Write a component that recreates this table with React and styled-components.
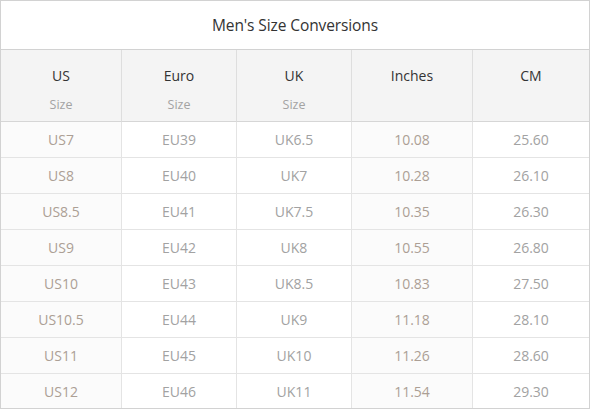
import React from 'react';
import styled, { createGlobalStyle } from 'styled-components';

const GlobalStyle = createGlobalStyle`
  html, body {
    margin: 0;
    padding: 0;
    background: #ffffff;
  }
  body {
    font-family: "Open Sans", "Noto Sans", sans-serif;
  }
`;

const Card = styled.div`
  width: 590px;
  height: 409px;
  box-sizing: border-box;
  border: 1px solid #d2d2d2;
  overflow: hidden;
  background: #fff;
`;

const Title = styled.div`
  height: 48px;
  display: flex;
  align-items: center;
  justify-content: center;
  border-bottom: 1px solid #d2d2d2;
  font-size: 15.5px;
  color: #333;
  letter-spacing: -0.1px;
`;

const Grid = styled.div`
  display: grid;
  grid-template-columns: 121px 115px 115px 121px 116px;
`;

const HeadCell = styled.div`
  height: 71px;
  display: flex;
  flex-direction: column;
  align-items: center;
  background: #f4f4f4;
  border-right: ${({ $last }) => ($last ? 'none' : '1px solid #dedede')};
  border-bottom: 1px solid #d6d6d6;
`;

const HeadLabel = styled.span`
  margin-top: 16px;
  font-size: 14px;
  color: #333;
  line-height: 20px;
`;

const HeadSub = styled.span`
  margin-top: 10px;
  font-size: 12.5px;
  color: #a3a3a3;
  line-height: 18px;
`;

const Cell = styled.div`
  height: 35px;
  display: flex;
  align-items: center;
  justify-content: center;
  font-size: 14px;
  color: ${({ $warm }) => ($warm ? '#ac9f95' : '#a2a2a2')};
  background: ${({ $shade }) => ($shade ? '#fbfbfb' : '#ffffff')};
  border-right: ${({ $last }) => ($last ? 'none' : '1px solid #e4e4e4')};
  border-bottom: 1px solid #e4e4e4;
`;

const columns = [
  { label: 'US', sub: 'Size', shade: true, warm: true },
  { label: 'Euro', sub: 'Size' },
  { label: 'UK', sub: 'Size' },
  { label: 'Inches', shade: true, warm: true },
  { label: 'CM' },
];

const rows = [
  ['US7', 'EU39', 'UK6.5', '10.08', '25.60'],
  ['US8', 'EU40', 'UK7', '10.28', '26.10'],
  ['US8.5', 'EU41', 'UK7.5', '10.35', '26.30'],
  ['US9', 'EU42', 'UK8', '10.55', '26.80'],
  ['US10', 'EU43', 'UK8.5', '10.83', '27.50'],
  ['US10.5', 'EU44', 'UK9', '11.18', '28.10'],
  ['US11', 'EU45', 'UK10', '11.26', '28.60'],
  ['US12', 'EU46', 'UK11', '11.54', '29.30'],
];

function App() {
  return (
    <>
      <GlobalStyle />
      <Card>
        <Title>Men's Size Conversions</Title>
        <Grid>
          {columns.map((col, i) => (
            <HeadCell key={col.label} $last={i === columns.length - 1}>
              <HeadLabel>{col.label}</HeadLabel>
              {col.sub && <HeadSub>{col.sub}</HeadSub>}
            </HeadCell>
          ))}
          {rows.map((row, r) =>
            row.map((value, c) => (
              <Cell
                key={`${r}-${c}`}
                $shade={columns[c].shade}
                $warm={columns[c].warm}
                $last={c === row.length - 1}
              >
                {value}
              </Cell>
            ))
          )}
        </Grid>
      </Card>
    </>
  );
}

export default App;
